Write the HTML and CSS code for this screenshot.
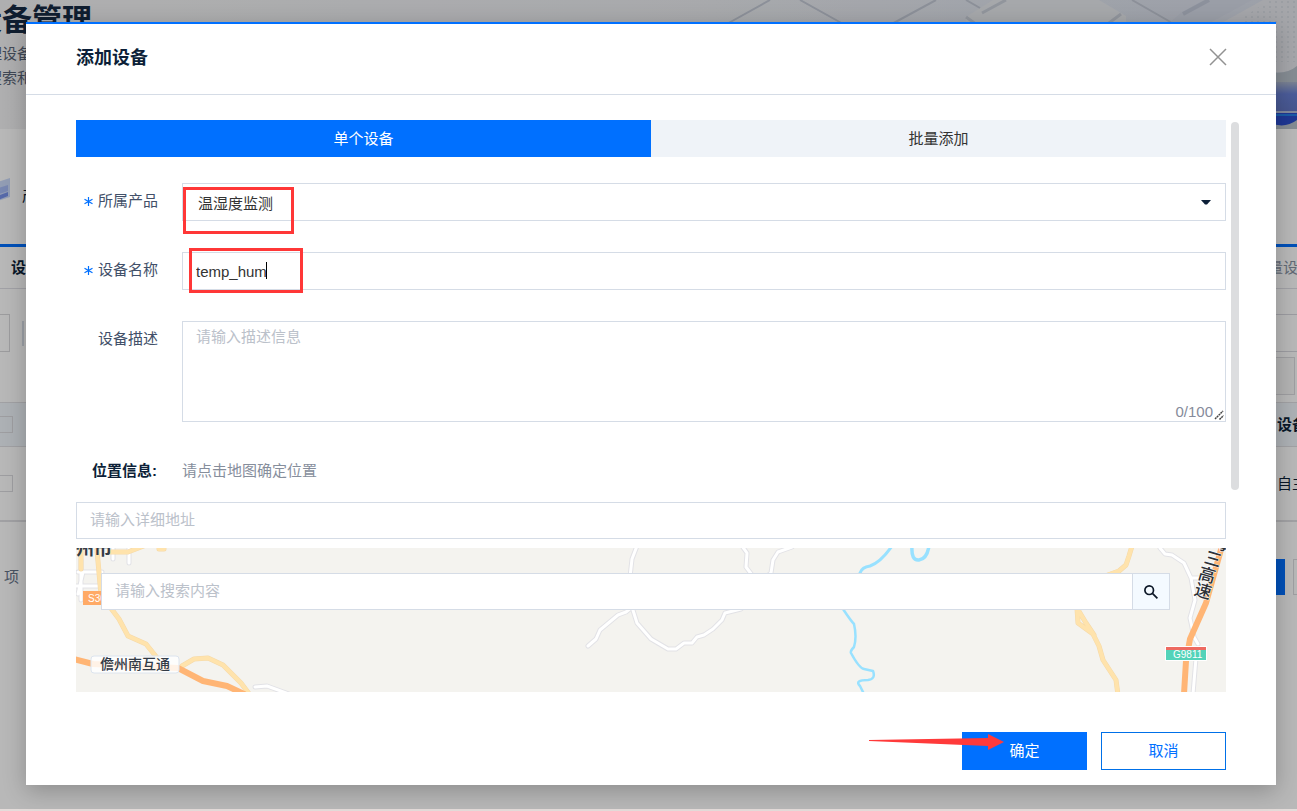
FILE: index.html
```html
<!DOCTYPE html>
<html lang="zh-CN">
<head>
<meta charset="utf-8">
<title>添加设备</title>
<link rel="stylesheet" href="styles.css">
</head>
<body>
<div class="page">
  <header class="banner">
    <div class="banner-text">
      <h1>设备管理</h1>
      <p>管理设备</p>
      <p>可搜索和</p>
    </div>
    <svg class="banner-art" viewBox="-103 0 600 129" aria-hidden="true">
      <defs>
        <linearGradient id="tube" x1="0" y1="0" x2="0" y2="1"><stop offset="0" stop-color="#a9b4cb"/><stop offset=".4" stop-color="#687fd4"/><stop offset="1" stop-color="#6377c4"/></linearGradient>
        <linearGradient id="haze"><stop offset="0" stop-color="#dee3ed" stop-opacity="0"/><stop offset="1" stop-color="#d9deea"/></linearGradient>
        <pattern id="dots" width="6" height="5" patternUnits="userSpaceOnUse"><circle cx="2" cy="2" r="1" fill="#d3d7df"/></pattern>
      </defs>
      <path d="M-103 0h600v129h-600z" fill="url(#haze)"/>
      <path d="M193 0L166 17v12h160V16L299 0z" fill="#e6e9ee"/>
      <path d="M206 0l-24 13M321 14l-20 15M166 17l14 10" fill="none" stroke="#c9cfd9" stroke-width="3"/>
      <path d="M-30 0l-45 25M0 0l45 25M136 0L90 25M166 0l14 8M332 0l42 24" fill="none" stroke="#c2c8d4" stroke-width="2"/>
      <path d="M382 12L404 0h48l-44 24h-40z" fill="#d6dbe8"/>
      <path d="M383 14l26-14" stroke="#c3cad9" stroke-width="4"/>
      <path d="M418 25L463 0h34v66q-6 7-20 6h-59z" fill="#e5e7ec"/>
      <path d="M445 16L470 0h27v62h-52z" fill="url(#dots)"/>
      <path d="M470 72q16 3 27-6v63h-27z" fill="#b9c2cc"/>
      <path d="M470 82h27v30h-27z" fill="url(#tube)"/>
      <path d="M470 113h27v7q-12 9-27 3z" fill="#2a4dcd"/>
      <path d="M470 112h27" stroke="#b3bed8" stroke-width="2"/>
      <path d="M470 115h27" stroke="#247fe8" stroke-width="2"/>
    </svg>
  </header>
  <div class="product-bar">
    <svg width="40" height="34" viewBox="0 0 40 34" aria-hidden="true"><path d="M0 13L40 0v19L0 32z" fill="#cbdafa"/><path d="M0 19l38-12v6L0 26z" fill="#a7bbf5"/><path d="M0 28l38-14v4L0 33z" fill="#7892eb"/></svg>
    <span>产品</span>
  </div>
  <div class="tabs-line">
    <strong>设备</strong><span>批量设备</span>
  </div>
  <div class="toolbar"><span class="tool-box"></span><span class="tool-bar"></span><span class="tool-search"></span></div>
  <div class="filter"><span></span></div>
  <div class="grid-row grid-head"><i class="tick"></i><strong>设备</strong></div>
  <div class="grid-row grid-body"><i class="tick"></i><span>自主</span></div>
  <div class="pager"><span>项</span><b class="page-now"></b><b class="page-next"></b></div>
</div>

<div class="mask">
  <form class="modal" role="dialog" aria-labelledby="dialog-title">
    <div class="modal-head">
      <h2 id="dialog-title">添加设备</h2>
      <button type="button" class="close" aria-label="关闭"><svg width="18" height="18" viewBox="0 0 18 18"><path d="M1 1l16 16M17 1L1 17" stroke="#929292" stroke-width="1.5" fill="none"/></svg></button>
    </div>
    <div class="modal-body">
      <div class="tabs">
        <button type="button" class="tab active">单个设备</button>
        <button type="button" class="tab">批量添加</button>
      </div>

      <div class="field">
        <label for="product"><svg class="star" width="9" height="9" viewBox="0 0 9 9"><path d="M4.500 0v9M.5 2.200l8 4.600M.5 6.800l8-4.600" stroke="#0070ff" stroke-width="1.200"/></svg>所属产品</label>
        <div class="control">
          <select id="product"><option>温湿度监测</option></select>
          <svg class="caret" width="10" height="5" viewBox="0 0 10 5"><path d="M0 0h10L6 4.500H4z" fill="#0c1f38"/></svg>
          <span class="mark mark-product"></span>
        </div>
      </div>

      <div class="field">
        <label for="name"><svg class="star" width="9" height="9" viewBox="0 0 9 9"><path d="M4.500 0v9M.5 2.200l8 4.600M.5 6.800l8-4.600" stroke="#0070ff" stroke-width="1.200"/></svg>设备名称</label>
        <div class="control">
          <input id="name" class="box" type="text" value="temp_hum">
          <span class="text-cursor"></span>
          <span class="mark mark-name"></span>
        </div>
      </div>

      <div class="field">
        <label for="desc">设备描述</label>
        <div class="control">
          <textarea id="desc" class="box" placeholder="请输入描述信息"></textarea>
          <span class="count">0/100</span>
          <svg class="grip" width="10" height="10" viewBox="0 0 10 10"><path d="M1 9l8-8M5.500 9.500l4-4" stroke="#444" stroke-width="1.500" stroke-dasharray="2 .6"/></svg>
        </div>
      </div>

      <div class="location"><label for="address">位置信息:</label><span>请点击地图确定位置</span></div>
      <input id="address" class="box short" type="text" placeholder="请输入详细地址">

      <div class="map">
        <svg class="map-art" viewBox="0 0 1150 144" preserveAspectRatio="xMidYMin slice" aria-hidden="true">
          <defs>
            <path id="lanes" d="M561 -2l-5 13-2 18 2 30 5 16 14 16 17 10h8l8-6h8l5-6 7-2 9-6 9-9 3-7 16-4M512 98l8-7 4-9 18-15 8-3 6-5M666 -2l5 7-1 14 6 8M716 -1l-14 5-5 8-2 13-5 4M1084 0l5 6 7 1 12 8 7 15 4 22-5 18 4 19 4 7M1115 30h10M1120 110l-3 36M179 139l12-1 22 8M37 0v11M53 0v15M2 24h24M7 24l-5 22M0 38h25M5 12v40"/>
            <path id="streets" d="M5 -1v22M21 2l4 45 18 24 9 17 18 8 12 15M34 4h18l18-7M83 1h5M106 118l12-7 14-1 15 7 18 18 9 12M1056 -2l-3 10-3 9-7 6-14 5M1001 60l1 15 15 11 6 12 4 14 13 20 2 15M1001 60l9 15 8 12"/>
          </defs>
          <rect width="1150" height="144" fill="#f4f3ef"/>
          <g fill="none" stroke-linejoin="round" stroke-linecap="round">
            <use href="#lanes" stroke="#e2e2e6" stroke-width="5"/>
            <use href="#lanes" stroke="#fff" stroke-width="3"/>
            <use href="#streets" stroke="#f5d9a8" stroke-width="5"/>
            <use href="#streets" stroke="#ffe3ac" stroke-width="4"/>
            <path d="M-2 111l19 5 85 4 25 13 24 5 17 8" stroke="#ffb575" stroke-width="6"/>
            <path d="M1146 -2l-16 57-16 36-4 22-2 33" stroke="#ffb575" stroke-width="6"/>
            <g stroke="#98e1ff"><path d="M816 -2q-11 16-22 20-8 1-10 7" stroke-width="3"/><path d="M836 -2q-1 15 7 14 8-1 10-14" stroke-width="3.500"/><path d="M767 61q8 12 11 15 3 13 0 23-4 4-3 6 8 15 13 16l9 2q3 8-5 9-14 0-8 6l4 8" stroke-width="2.500"/></g>
          </g>
          <rect x="7" y="43" width="23" height="14" fill="#ffaa66"/>
          <text x="12" y="54" class="road-code">S308</text>
          <text x="-18" y="7" class="city">儋州市</text>
          <rect x="15" y="108" width="88" height="17" rx="3" fill="#fff" fill-opacity=".82" stroke="#dce4ee"/>
          <text x="24" y="121" class="place">儋州南互通</text>
          <rect x="1089" y="98" width="42" height="15" rx="1" fill="#fff"/>
          <path d="M1090 99h40v13h-40z" fill="#53d3b9"/><path d="M1090 99h40v3h-40z" fill="#ed6a61"/>
          <text x="1097" y="110" class="road-code">G9811</text>
          <g class="expressway"><text transform="translate(1144 -5) rotate(16)" y="6">海</text><text transform="translate(1137 11) rotate(16)" y="6">三</text><text transform="translate(1131 27) rotate(16)" y="6">高</text><text transform="translate(1127 43) rotate(16)" y="6">速</text></g>
        </svg>
        <div class="map-search">
          <input class="box short" type="text" placeholder="请输入搜索内容" aria-label="搜索">
          <button type="button" aria-label="搜索"><svg width="14" height="14" viewBox="0 0 14 14" fill="none" stroke="#0c1726" stroke-width="1.700"><circle cx="5.200" cy="5.200" r="4.300"/><path d="M8.400 8.400l5 5"/></svg></button>
        </div>
      </div>
    </div>
    <div class="modal-foot">
      <button type="button" class="btn primary">确定</button>
      <button type="button" class="btn">取消</button>
      <svg class="pointer" width="136" height="18" viewBox="0 0 136 18" aria-hidden="true"><path d="M0 7L119 5V1l16 8-16 8v-4L0 8z" fill="#ff3a3a"/></svg>
    </div>
    <div class="scroll-thumb"></div>
  </form>
</div>
</body>
</html>
```

FILE: styles.css
```css
* { box-sizing: border-box; }
body, input, textarea, select, button {
  font-family: "Liberation Sans", "Noto Sans CJK SC", sans-serif;
  font-size: 15px;
}
body { margin: 0; min-height: 100vh; background: #e4dcda; overflow: hidden; }
h1, h2, p { margin: 0; }
button { cursor: pointer; }

.page { min-height: calc(100vh - 2px); background: #fff; color: #0c1f38; overflow: hidden; }
.banner { display: flex; justify-content: space-between; height: 129px; background: linear-gradient(90deg, #f3f3f4, #e9ebef 55%, #dee3ed); overflow: hidden; }
.banner-text { margin-left: -28px; white-space: nowrap; color: #596477; line-height: 24px; }
.banner-text h1 { font-size: 30px; line-height: 40px; margin-bottom: 2px; color: #172a43; }
.banner-art { width: 600px; height: 129px; flex: none; }
.product-bar { display: flex; align-items: center; height: 115px; padding-top: 16px; margin-left: -30px; gap: 12px; }
.tabs-line { display: flex; align-items: center; justify-content: space-between; height: 45px; border-top: 3px solid #0070ff; border-bottom: 1px solid #e0e0e6; padding-left: 11px; padding-bottom: 3px; white-space: nowrap; margin-right: -16px; color: #8a93a3; }
.tabs-line strong { color: #0c1f38; }
.toolbar { display: flex; align-items: center; gap: 12px; margin-top: 25px; height: 38px; }
.tool-box { width: 10px; height: 38px; border: 1px solid #d8d8dc; border-left: 0; }
.tool-bar { width: 2px; height: 25px; background: #d9dee8; }
.tool-search { flex: 1; height: 38px; border: solid #d8d8e0; border-width: 1px 0; }
.filter { display: flex; justify-content: flex-end; height: 50px; padding: 5px 2px 0 0; }
.filter span { width: 100px; height: 38px; background: #f8f8f8; border: 1px solid #dcdce0; }
.grid-row { display: flex; align-items: center; justify-content: space-between; border: 0 solid #e0e0e4; white-space: nowrap; margin-right: -10px; }
.grid-row strong, .grid-row span { padding-bottom: 3px; }
.grid-head { height: 45px; background: #f0f6fb; border-width: 1px 0; }
.grid-body { height: 75px; border-bottom-width: 2px; }
.tick { width: 13px; height: 17px; border: 1px solid #dcdce0; border-left: 0; }
.pager { display: flex; align-items: center; height: 109px; gap: 8px; padding-left: 4px; color: #66748a; }
.pager span { padding-bottom: 3px; }
.page-now { margin-left: auto; width: 36px; height: 36px; background: #0070ff; }
.page-next { width: 4px; height: 36px; border: 1px solid #dcdce0; border-right: 0; }

.mask { position: absolute; inset: 0 0 2px; background: rgba(0, 0, 0, .28); padding: 22px 21px 24px 26px; }
.modal { position: relative; background: #fff; border-top: 2px solid #0070ff; box-shadow: 0 6px 22px rgba(0, 0, 0, .24); color: #0c1f38; }
.modal-head { display: flex; align-items: center; justify-content: space-between; height: 71px; padding: 0 49px 4px 50px; border-bottom: 1px solid #d5dce6; }
.modal-head h2 { font-size: 18px; padding-bottom: 2px; }
.close { display: flex; padding: 0; border: 0; background: none; }
.modal-body { padding: 25px 50px 0; }
.tabs { display: flex; height: 37px; margin-bottom: 26px; }
.tab { flex: 1; border: 0; padding: 0 0 2px; background: #eff3f8; color: #333; }
.tab.active { background: #0070ff; color: #fff; }

.field { display: flex; margin-bottom: 31px; }
.field label { display: flex; align-items: center; justify-content: flex-end; gap: 5px; width: 106px; height: 33px; padding-right: 24px; color: #425069; }
.star { margin-top: 4px; }
.control { position: relative; flex: 1; }
.box, select { display: block; width: 100%; height: 38px; padding: 0 13px; border: 1px solid #d5dce6; border-radius: 0; background: #fff; color: #333; outline: 0; }
select { appearance: none; padding: 2px 15px 0; }
textarea.box { height: 101px; padding: 4px 13px; resize: none; line-height: 22px; }
.box.short { height: 37px; padding-bottom: 2px; }
::placeholder { color: #bbc1ca; opacity: 1; }
.caret { position: absolute; right: 15px; top: 17px; }
.count { position: absolute; right: 13px; bottom: 1px; color: #868b9b; line-height: 18px; }
.grip { position: absolute; right: 2px; bottom: 2px; }
.mark { position: absolute; border: 3px solid #ff3737; pointer-events: none; }
.mark-product { left: 1px; top: 4px; width: 111px; height: 47px; z-index: 1; }
.mark-name { left: 7px; top: -4px; width: 114px; height: 45px; }
.text-cursor { position: absolute; left: 84px; top: 10px; width: 1px; height: 17px; background: #000; }

.location { display: flex; gap: 25px; height: 36px; line-height: 36px; padding-left: 16px; margin-bottom: 13px; color: #868e9c; }
.location label { font-weight: bold; color: #0c1f38; }
.map { position: relative; height: 144px; margin-top: 9px; padding: 25px 56px 0 25px; overflow: hidden; }
.map-art { position: absolute; inset: 0; width: 100%; height: 100%; }
.map-search { position: relative; display: flex; height: 37px; }
.map-search .box { flex: 1; }
.map-search button { display: flex; align-items: center; justify-content: center; width: 37px; padding: 0; background: #f4faff; border: 1px solid #d5dce6; border-left: 0; }
.road-code { font-size: 10px; fill: #fff; }
.city { font-size: 18px; font-weight: bold; fill: #333b47; }
.place { font-size: 14px; font-weight: 500; fill: #333b47; }
.expressway { font-size: 17px; font-weight: 500; fill: #2d3138; text-anchor: middle; stroke: #fff; stroke-width: 1px; paint-order: stroke; }

.modal-foot { position: relative; display: flex; justify-content: flex-end; gap: 14px; padding: 40px 50px 15px; }
.btn { width: 125px; height: 38px; padding: 0 0 3px; border: 1px solid #0070e8; background: #fff; color: #0070ff; }
.btn.primary { background: #0070ff; color: #fff; border-color: #0070ff; }
.pointer { position: absolute; right: 271px; top: 41px; }
.scroll-thumb { position: absolute; right: 37px; top: 98px; width: 8px; height: 368px; border-radius: 4px; background: #dcdddf; }
```
